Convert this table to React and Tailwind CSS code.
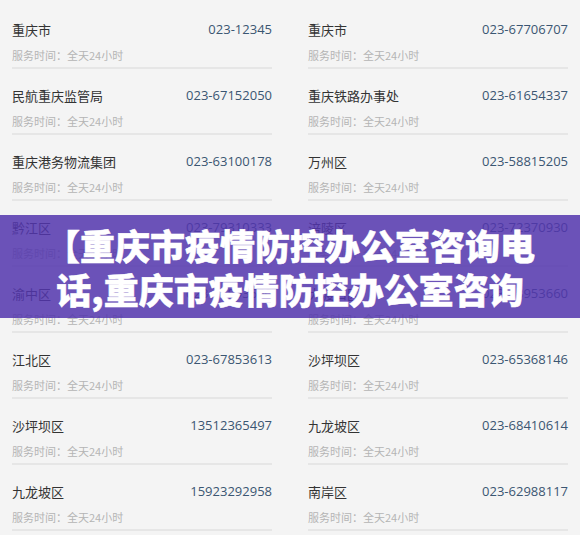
const left = [
  { name: "重庆市", phone: "023-12345" },
  { name: "民航重庆监管局", phone: "023-67152050" },
  { name: "重庆港务物流集团", phone: "023-63100178" },
  { name: "黔江区", phone: "023-79310333" },
  { name: "渝中区", phone: "023-63893660" },
  { name: "江北区", phone: "023-67853613" },
  { name: "沙坪坝区", phone: "13512365497" },
  { name: "九龙坡区", phone: "15923292958" },
];

const right = [
  { name: "重庆市", phone: "023-67706707" },
  { name: "重庆铁路办事处", phone: "023-61654337" },
  { name: "万州区", phone: "023-58815205" },
  { name: "涪陵区", phone: "023-72370930" },
  { name: "大渡口区", phone: "023-68953660" },
  { name: "沙坪坝区", phone: "023-65368146" },
  { name: "九龙坡区", phone: "023-68410614" },
  { name: "南岸区", phone: "023-62988117" },
];

function Row({ name, phone }) {
  return (
    <div className="pb-[17px]">
      <div className="flex items-center justify-between h-[20px]">
        <span className="text-[13px] text-[#333]">{name}</span>
        <span className="text-[13px] text-[#3b5672] font-['Open_Sans',sans-serif]">{phone}</span>
      </div>
      <div className="mt-[7px] h-[16px] leading-[16px] text-[11px] text-[#b5b5b5]">
        服务时间：全天24小时
      </div>
      <div className="mt-[4px] h-[2px] bg-[#e6e6e6]" />
    </div>
  );
}

export default function App() {
  return (
    <div className="relative w-[580px] h-[535px] overflow-hidden bg-[#f4f4f4] font-['Noto_Sans_CJK_SC',sans-serif]">
      {/* two column phone list */}
      <div className="grid grid-cols-2 gap-x-[36px] px-[12px] pt-[20px]">
        <div>
          {left.map((r) => (
            <Row key={r.name + r.phone} {...r} />
          ))}
        </div>
        <div>
          {right.map((r) => (
            <Row key={r.name + r.phone} {...r} />
          ))}
        </div>
      </div>

      {/* title banner */}
      <div className="absolute left-0 right-0 top-[215px] h-[103px] bg-[#5235ad]/85 flex flex-col items-center justify-center text-white font-black text-[35px] leading-[44px] [-webkit-text-stroke:0.5px_white]">
        <div className="whitespace-nowrap">【重庆市疫情防控办公室咨询电</div>
        <div className="whitespace-nowrap">话,重庆市疫情防控办公室咨询</div>
      </div>
    </div>
  );
}
